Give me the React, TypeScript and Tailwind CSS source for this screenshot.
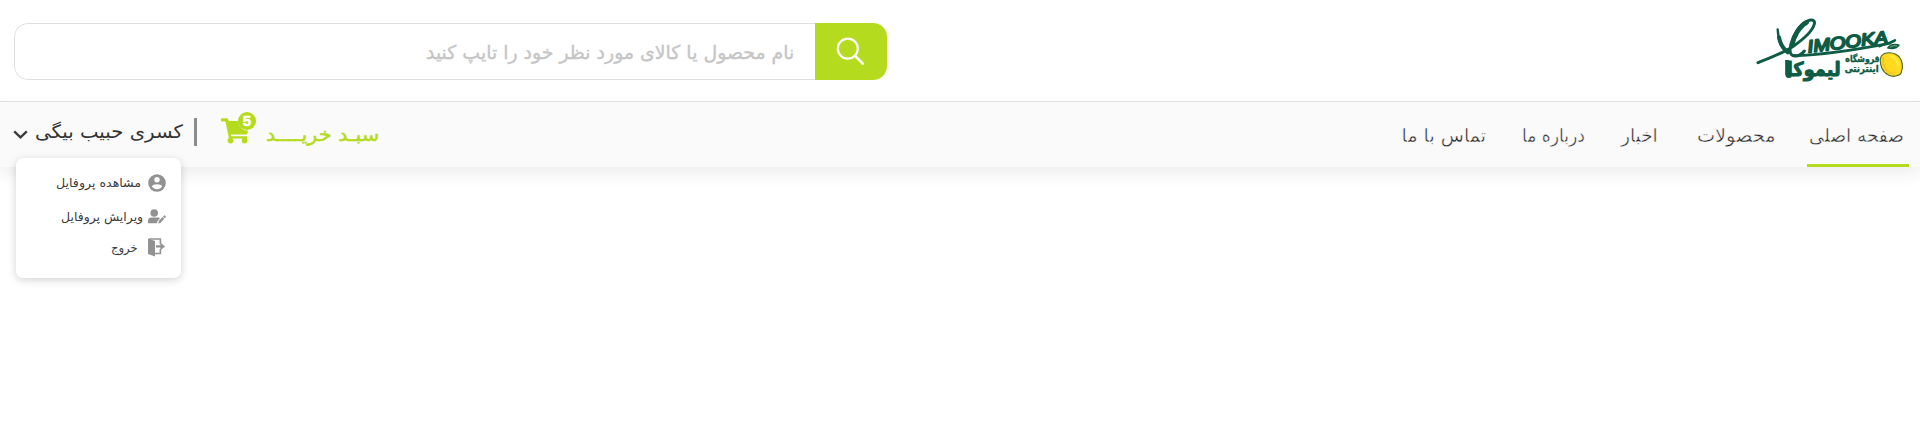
import { useLayoutEffect, useRef } from "react";

type FitTextProps = { children: string; className: string };

/** One line of right-to-left text, stretched to exactly fill the width given in className. */
function FitText({ children, className }: FitTextProps) {
  const inner = useRef<HTMLSpanElement>(null);
  useLayoutEffect(() => {
    const el = inner.current;
    if (!el || !el.parentElement) return;
    el.style.transform = `scaleX(${el.parentElement.clientWidth / el.offsetWidth})`;
  }, [children]);
  return (
    <span dir="rtl" className={`block whitespace-nowrap ${className}`}>
      <span ref={inner} className="inline-block origin-right">
        {children}
      </span>
    </span>
  );
}

function Logo() {
  return (
    <svg className="h-[100px] w-[180px]" viewBox="0 0 540 300" fill="none">
      <g stroke="#0d5c43" strokeLinecap="round" strokeLinejoin="round">
        <path d="M54 188C95 172 132 158 162 137C192 116 218 92 223 72C226 60 215 57 202 63C180 73 161 100 153 132C146 158 152 170 169 168C179 167 187 161 193 153" strokeWidth="9" />
        <path d="M200 67C178 79 162 108 156 135" strokeWidth="14" />
        <path d="M160 167C235 165 350 149 448 130L464 122" strokeWidth="8" />
        <path d="M113 88C114 110 120 136 140 156" strokeWidth="7" />
        <path d="M117 112C120 130 130 146 143 157" strokeWidth="12" />
        <path d="M418 140L466 120" strokeWidth="5" />
      </g>
      <text x="205" y="158" fill="#0d5c43" stroke="#0d5c43" strokeWidth="5.5" strokeLinejoin="round" fontFamily="Liberation Sans" fontStyle="italic" fontSize="52" textLength="242" lengthAdjust="spacingAndGlyphs" transform="rotate(-7 205 158)">IMOOKA</text>
      <path d="M141 180V222Q142 232 153 227" stroke="#0d5c43" strokeWidth="11" />
      <text x="302" y="228" direction="rtl" fill="#0d5c43" stroke="#0d5c43" strokeWidth="3" strokeLinejoin="round" fontFamily="DejaVu Sans" fontWeight="bold" fontSize="58" textLength="162" lengthAdjust="spacingAndGlyphs">لیموکا</text>
      <text x="419" y="186" direction="rtl" fill="#0d5c43" stroke="#0d5c43" strokeWidth="1.2" fontFamily="DejaVu Sans" fontWeight="bold" fontSize="28" textLength="103" lengthAdjust="spacingAndGlyphs">فروشگاه</text>
      <text x="416" y="216" direction="rtl" fill="#0d5c43" stroke="#0d5c43" strokeWidth="1.2" fontFamily="DejaVu Sans" fontWeight="bold" fontSize="28" textLength="102" lengthAdjust="spacingAndGlyphs">اینترنتی</text>
      <path d="M440 145C448 131 464 129 480 134C473 148 456 151 440 145Z" fill="#0d5c43" />
      <path d="M450 142C457 137 464 136 471 138" stroke="#cfe08a" strokeWidth="2" />
      <path d="M424 168C435 154 463 155 478 171C487 182 490 201 485 212C484 220 480 225 474 226C455 235 433 222 425 203C420 190 419 178 424 168Z" fill="#ffd91f" stroke="#4a6a2a" strokeWidth="3.5" />
      <path d="M430 172C426 190 436 217 458 221" stroke="#f2b01c" strokeWidth="5" strokeDasharray="3 2" />
      <path d="M449 170C464 168 475 184 476 200" stroke="#ffe836" strokeWidth="9" />
    </svg>
  );
}

function CartIcon() {
  return (
    <svg className="h-[36px] w-[36px]" viewBox="0 0 36 36">
      <g fill="#b5db1f">
        <path d="M0 7.2Q0 6.2 1 6.2H6.4L8 9H17.2C18 15 21.5 18.6 27.2 18.7L26 22.6H10L10.3 24.2H26V26.4H8L4.4 9.6H1Q0 9.6 0 8.7Z" />
        <circle cx="9.5" cy="28.6" r="2.9" />
        <circle cx="23.6" cy="28.6" r="2.9" />
        <circle cx="26" cy="9" r="9" />
      </g>
      <text x="26" y="14.3" textAnchor="middle" fill="#fff" stroke="#fff" strokeWidth=".6" fontFamily="Liberation Sans" fontWeight="bold" fontSize="15">5</text>
    </svg>
  );
}

function AccountIcon() {
  return (
    <svg className="h-[18px] w-[18px]" viewBox="0 0 18 18">
      <circle cx="9" cy="9" r="8.8" fill="#929292" />
      <circle cx="9" cy="5.8" r="2.7" fill="#fff" />
      <path d="M3.8 12.6C4.8 9.4 13.2 9.4 14.2 12.6C12 16 6 16 3.8 12.6Z" fill="#fff" />
    </svg>
  );
}

function EditIcon() {
  return (
    <svg className="h-[15px] w-[18px]" viewBox="0 0 18 15" fill="#929292">
      <circle cx="6.2" cy="4" r="3.8" />
      <path d="M0 14V12Q0 8.5 3.3 8.5H10.8L12 9.6L9.5 12.1L9 14.3H.5Z" />
      <path d="M10.3 14.4L10.8 12L14.5 8.1L16.2 9.8L12.4 13.9ZM15 7.6L16.1 6.5Q16.5 6.1 17 6.6L17.7 7.3Q18.1 7.8 17.7 8.2L16.7 9.3Z" />
    </svg>
  );
}

function ExitIcon() {
  return (
    <svg className="h-[19px] w-[18px]" viewBox="0 0 18 19" fill="none">
      <path d="M0 .5L7 3V18.5L0 16Z" fill="#929292" />
      <path d="M1 1H12.4V6M12.4 11V15.5H7" stroke="#929292" strokeWidth="1.6" />
      <path d="M8 7.2H12.4V4.6L17 8.4L12.4 12.2V9.6H8Z" fill="#929292" />
    </svg>
  );
}

const links = [
  { label: "صفحه اصلی", style: "w-[95px] mr-[16px]" },
  { label: "محصولات", style: "w-[78px] mr-[34px]" },
  { label: "اخبار", style: "w-[37px] mr-[39px]" },
  { label: "درباره ما", style: "w-[63px] mr-[36px]" },
  { label: "تماس با ما", style: "w-[84px] mr-[36px]" },
];

export default function App() {
  return (
    <div className="h-[421px] w-full overflow-hidden bg-white font-['DejaVu_Sans',sans-serif]">
      <header className="flex h-[101px] items-start justify-between pl-[14px]">
        <div className="mt-[23px] flex h-[57px] w-[873px] overflow-hidden rounded-[14px]">
          <div className="flex flex-1 justify-end rounded-l-[14px] border border-r-0 border-[#dfdfdf] pr-[21px]">
            <FitText className="mt-[12px] h-[32px] w-[368px] text-[19px] leading-[32px] text-[#c6c6c6] [-webkit-text-stroke:0.4px_#c6c6c6]">
              نام محصول یا کالای مورد نظر خود را تایپ کنید
            </FitText>
          </div>
          <button aria-label="جستجو" className="flex w-[72px] items-start bg-[#b5db1f] pt-[14px] pl-[21px]">
            <svg className="h-[29px] w-[29px]" viewBox="0 0 29 29" fill="none" stroke="#fff" strokeWidth="2.2">
              <circle cx="11.8" cy="11.6" r="10" />
              <path d="M18.8 18.6L26.8 26.6" strokeWidth="2.6" strokeLinecap="round" />
            </svg>
          </button>
        </div>
        <Logo />
      </header>

      <nav className="relative flex h-[66px] justify-between border-t border-[#dfdfdf] bg-[#fafafa] shadow-[0_7px_16px_rgba(0,0,0,0.07)]">
        <div className="flex">
          <svg className="mt-[28px] ml-[13px] h-[10px] w-[15px]" viewBox="0 0 15 10" fill="none" stroke="#3b3b3b" strokeWidth="2.4">
            <path d="M1.2 1.4L7.5 7.3L13.8 1.4" />
          </svg>
          <FitText className="mt-[14px] ml-[7px] h-[32px] w-[148px] text-[18.5px] leading-[32px] text-[#333]">
            کسری حبیب بیگی
          </FitText>
          <div className="mt-[16px] ml-[11px] h-[28px] w-[3px] bg-[#8c8c8c]" />
          <div className="mt-[10px] ml-[24px]">
            <CartIcon />
          </div>
          <FitText className="mt-[17px] ml-[9px] h-[32px] w-[113px] text-[18.5px] leading-[32px] text-[#b5db1f] [-webkit-text-stroke:0.5px_#b5db1f]">
            سبـد خریــــد
          </FitText>
          <div className="absolute top-[56px] left-[16px] flex h-[120px] w-[165px] flex-col rounded-[7px] bg-white pr-[15px] shadow-[0_2px_8px_rgba(0,0,0,0.18)]">
            <div className="mt-[16px] flex h-[18px] items-center justify-end">
              <FitText className="mr-[7px] w-[85px] text-[12px] leading-[18px] text-[#3b3b3b]">مشاهده پروفایل</FitText>
              <AccountIcon />
            </div>
            <div className="mt-[17px] flex h-[15px] items-center justify-end">
              <FitText className="mr-[5px] w-[82px] text-[12px] leading-[18px] text-[#3b3b3b]">ویرایش پروفایل</FitText>
              <EditIcon />
            </div>
            <div className="mt-[14px] flex h-[19px] items-center justify-end">
              <FitText className="mr-[10px] w-[27px] text-[12px] leading-[18px] text-[#3b3b3b]">خروج</FitText>
              <ExitIcon />
            </div>
          </div>
        </div>
        <div className="flex flex-col items-end">
          <div dir="ltr" className="flex h-[62px] flex-row-reverse">
            {links.map((link) => (
              <FitText
                key={link.label}
                className={`mt-[17px] h-[32px] text-[19px] leading-[32px] text-[#222] [-webkit-text-stroke:0.5px_#fafafa] ${link.style}`}
              >
                {link.label}
              </FitText>
            ))}
          </div>
          <div className="mr-[11px] h-[3px] w-[102px] bg-[#b5db1f]" />
        </div>
      </nav>
    </div>
  );
}
